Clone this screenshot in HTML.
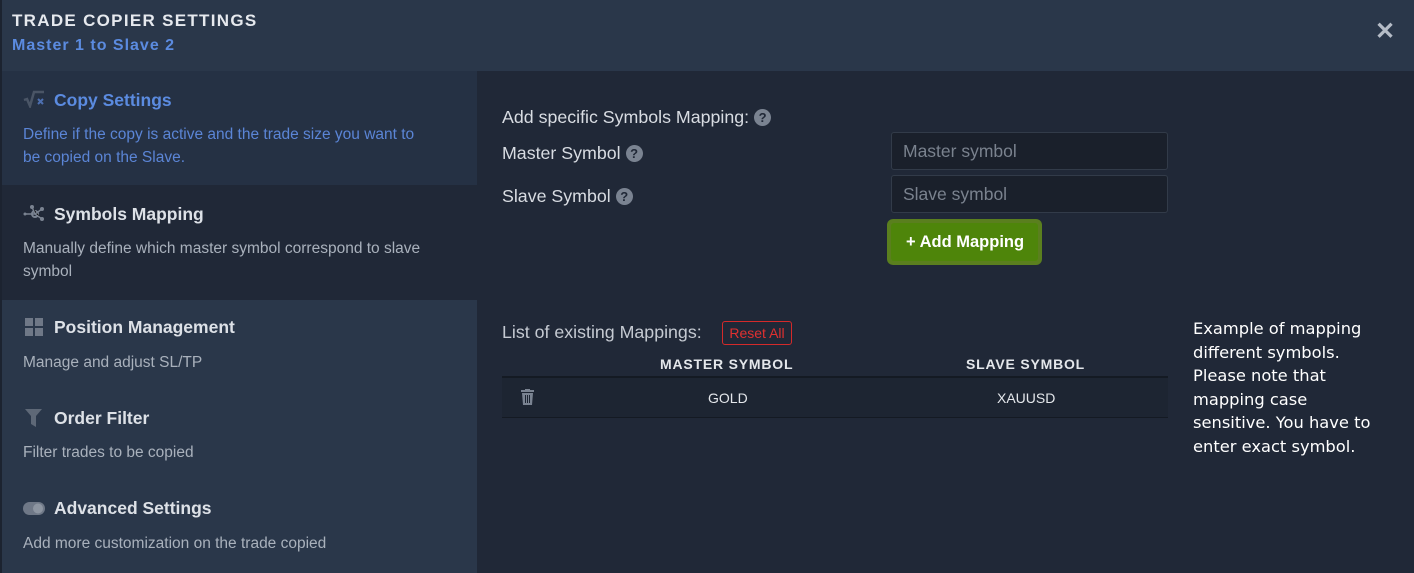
<!DOCTYPE html>
<html><head><style>
*{margin:0;padding:0;box-sizing:border-box}
body{width:1414px;height:573px;background:#202837;font-family:"Liberation Sans",sans-serif;position:relative;overflow:hidden}
.hdr{position:absolute;left:0;top:0;width:1414px;height:71px;background:#2a374a;border-left:2px solid #1c2330}
.t1{position:absolute;left:10px;top:11px;color:#e6e9ee;font-weight:bold;font-size:17px;letter-spacing:1.3px}
.t2{position:absolute;left:10px;top:37px;color:#5b8be0;font-weight:bold;font-size:16px;letter-spacing:1px}
.x{position:absolute;left:1373px;top:20px;color:#b5bcc7;font-size:24px;font-weight:bold;line-height:24px}
.side{position:absolute;left:0;top:71px;width:477px;height:502px;background:#2a374a;border-left:2px solid #1c2330}
.it{position:absolute;left:0;width:475px}
.it h3{position:absolute;left:52px;font-size:17.5px;font-weight:bold;color:#dde1e7}
.it p{position:absolute;left:21px;font-size:15.5px;color:#a9b1bc;line-height:23px;width:432px}
.ic{position:absolute;left:21px;width:22px;height:18px}
.lbl{position:absolute;color:#d8dce2;font-size:17.8px}
.q{display:inline-block;width:17px;height:17px;border-radius:50%;background:#7a8391;color:#202837;font-size:13px;font-weight:bold;text-align:center;line-height:17px;vertical-align:1px;margin-left:5px}
.inp{position:absolute;left:891px;width:277px;height:38px;background:#1a202b;border:1px solid #323b49;border-radius:3px;color:#7a828e;font-size:17.5px;padding:8px 11px}
.btn{position:absolute;left:887px;top:219px;width:155px;height:46px;background:#5a7f1e;border-radius:6px;padding:4px}
.btn div{background:#4e850a;height:38px;border-radius:3px;color:#fff;font-weight:bold;font-size:16.5px;line-height:38px;padding-left:15px}
.reset{position:absolute;left:722px;top:321px;width:70px;height:24px;border:1px solid #d42a2a;border-radius:3px;color:#e03030;font-size:14px;line-height:22px;text-align:center}
.th{position:absolute;top:356px;color:#e4e7eb;font-weight:bold;font-size:14px;letter-spacing:0.8px}
.note{position:absolute;left:1193px;top:317px;color:#fff;line-height:23.5px;font-family:"DejaVu Sans","Liberation Sans",sans-serif;width:182px;font-size:16.3px}
</style></head><body>
<div class="hdr"><div class="t1">TRADE COPIER SETTINGS</div><div class="t2">Master 1 to Slave 2</div><div class="x">✕</div></div>
<div class="side">
 <div class="it" style="top:0;height:114px;background:#253144">
  <svg class="ic" style="top:19px" viewBox="0 0 22 18"><path d="M1 10l3-1 3 7 4-14h10" stroke="#4a5566" stroke-width="2.5" fill="none"/><path d="M15 9l5 5M20 9l-5 5" stroke="#4d6fb0" stroke-width="2"/></svg>
  <h3 style="top:19px;color:#5b8be0">Copy Settings</h3>
  <p style="top:52px;color:#5b85d6;width:405px">Define if the copy is active and the trade size you want to be copied on the Slave.</p>
 </div>
 <div class="it" style="top:114px;height:115px;background:#202837">
  <svg class="ic" style="top:19px" viewBox="0 0 22 18"><circle cx="9" cy="3" r="2" fill="#7a8391"/><circle cx="19" cy="5" r="2" fill="#7a8391"/><circle cx="19" cy="15" r="2" fill="#7a8391"/><circle cx="2" cy="10" r="1.5" fill="#7a8391"/><circle cx="12" cy="10" r="3" fill="none" stroke="#7a8391" stroke-width="2"/><path d="M9 3l3 7 7 5M12 10l7-5M2 10h10" stroke="#7a8391" stroke-width="1.5"/></svg>
  <h3 style="top:19px">Symbols Mapping</h3>
  <p style="top:52px">Manually define which master symbol correspond to slave symbol</p>
 </div>
 <div class="it" style="top:229px;height:90px">
  <svg class="ic" style="top:18px" viewBox="0 0 22 18"><rect x="2" y="0" width="8" height="8" fill="#6f7887"/><rect x="12" y="0" width="8" height="8" fill="#6f7887"/><rect x="2" y="10" width="8" height="8" fill="#6f7887"/><rect x="12" y="10" width="8" height="8" fill="#6f7887"/></svg>
  <h3 style="top:17px">Position Management</h3>
  <p style="top:51px">Manage and adjust SL/TP</p>
 </div>
 <div class="it" style="top:319px;height:90px">
  <svg class="ic" style="top:19px" viewBox="0 0 22 18"><path d="M2 0h17l-6 7v11l-5-3V7z" fill="#5e6877"/></svg>
  <h3 style="top:18px">Order Filter</h3>
  <p style="top:51px">Filter trades to be copied</p>
 </div>
 <div class="it" style="top:409px;height:93px">
  <svg class="ic" style="top:20px" viewBox="0 0 22 18"><rect x="0" y="2" width="22" height="13" rx="6.5" fill="#6f7887"/><circle cx="15" cy="8.5" r="5" fill="#8d95a1"/></svg>
  <h3 style="top:18px">Advanced Settings</h3>
  <p style="top:52px">Add more customization on the trade copied</p>
 </div>
</div>
<div class="lbl" style="left:502px;top:107px">Add specific Symbols Mapping:<span class="q">?</span></div>
<div class="lbl" style="left:502px;top:143px">Master Symbol<span class="q">?</span></div>
<div class="lbl" style="left:502px;top:186px">Slave Symbol<span class="q">?</span></div>
<div class="inp" style="top:132px">Master symbol</div>
<div class="inp" style="top:175px">Slave symbol</div>
<div class="btn"><div>+ Add Mapping</div></div>
<div class="lbl" style="left:502px;top:322px;color:#c5cad2">List of existing Mappings:</div>
<div class="reset">Reset All</div>
<div class="th" style="left:660px">MASTER SYMBOL</div>
<div class="th" style="left:966px">SLAVE SYMBOL</div>
<div style="position:absolute;left:502px;top:376px;width:666px;height:2px;background:#141a23"></div>
<div style="position:absolute;left:502px;top:378px;width:666px;height:40px;background:#1d2532;border-bottom:1px solid #141a23"></div>
<svg style="position:absolute;left:520px;top:389px" width="15" height="16" viewBox="0 0 15 16"><rect x="1" y="1" width="13" height="2" fill="#7a8391"/><rect x="5" y="0" width="5" height="2" fill="#7a8391"/><path d="M2 4h11l-1 12H3z" fill="#7a8391"/><path d="M5.5 6v8M7.5 6v8M9.5 6v8" stroke="#1d2532" stroke-width="1"/></svg>
<div style="position:absolute;left:708px;top:390px;color:#e4e7eb;font-size:14px">GOLD</div>
<div style="position:absolute;left:997px;top:390px;color:#e4e7eb;font-size:14px">XAUUSD</div>
<div class="note">Example of mapping different symbols. Please note that mapping case sensitive. You have to enter exact symbol.</div>
</body></html>
